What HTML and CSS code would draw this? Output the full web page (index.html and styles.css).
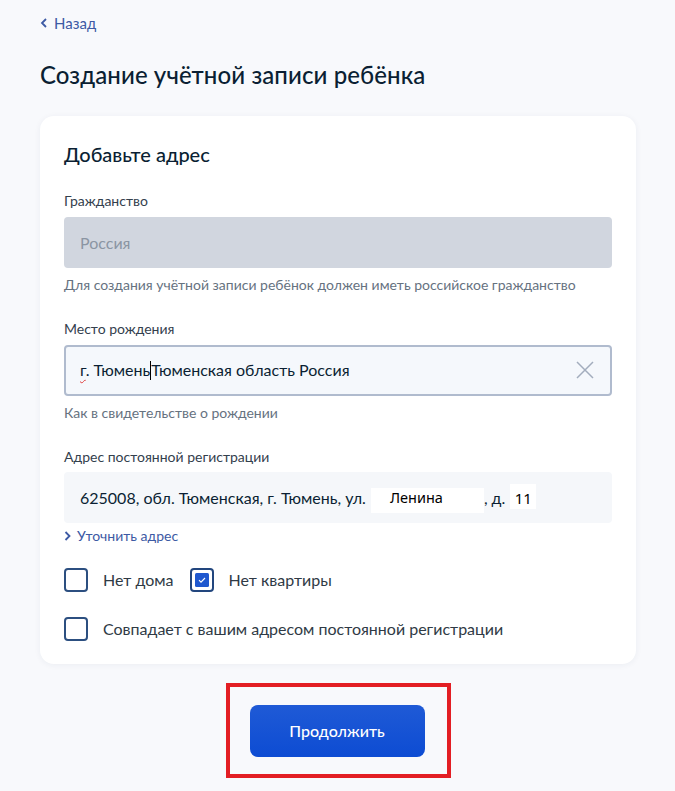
FILE: index.html
```html
<!DOCTYPE html>
<html lang="ru">
<head>
<meta charset="utf-8">
<title>Создание учётной записи ребёнка</title>
<link rel="stylesheet" href="styles.css">
</head>
<body>
<div class="page">
  <a class="back" href="#"><svg class="back-icon" width="8" height="10" viewBox="0 0 8 10"><path d="M6 1 L2 5 L6 9" fill="none" stroke="currentColor" stroke-width="1.8"/></svg>Назад</a>
  <h1 class="title">Создание учётной записи ребёнка</h1>
  <div class="card">
    <h2 class="card-title">Добавьте адрес</h2>

    <div class="label">Гражданство</div>
    <div class="field field-disabled">Россия</div>
    <div class="hint">Для создания учётной записи ребёнок должен иметь российское гражданство</div>

    <div class="label label-gap">Место рождения</div>
    <div class="field field-input">
      <span class="value"><span class="spell">г</span>. Тюмень<span class="caret"></span>Тюменская область Россия</span>
      <svg class="clear" width="18" height="18" viewBox="0 0 18 18"><path d="M1 1 L17 17 M17 1 L1 17" stroke="#a3adbd" stroke-width="1.5" fill="none"/></svg>
    </div>
    <div class="hint">Как в свидетельстве о рождении</div>

    <div class="label label-gap">Адрес постоянной регистрации</div>
    <div class="field field-address">625008, обл. Тюменская, г. Тюмень, ул.<span class="patch patch-street">Ленина</span>, д.<span class="patch patch-house">11</span></div>
    <a class="refine" href="#"><svg class="refine-icon" width="7" height="10" viewBox="0 0 7 10"><path d="M1.5 1 L5.5 5 L1.5 9" fill="none" stroke="currentColor" stroke-width="1.8"/></svg>Уточнить адрес</a>

    <div class="checks-row">
      <label class="check"><span class="box"></span>Нет дома</label>
      <label class="check"><span class="box box-checked"><svg width="14" height="14" viewBox="0 0 14 14"><rect width="14" height="14" rx="1.5" fill="#1f58cf"/><path d="M4 7.2 L6 9.2 L10 5" fill="none" stroke="#fff" stroke-width="1.1"/></svg></span>Нет квартиры</label>
    </div>
    <div class="checks-row checks-row-2">
      <label class="check"><span class="box"></span>Совпадает с вашим адресом постоянной регистрации</label>
    </div>
  </div>
  <div class="actions">
    <div class="highlight">
      <button class="btn">Продолжить</button>
    </div>
  </div>
</div>
</body>
</html>
```

FILE: styles.css
```css
* { box-sizing: border-box; }
html, body { margin: 0; padding: 0; }
body {
  background: #f8f9fc;
  font-family: Lato, "Noto Sans", "Liberation Sans", sans-serif;
  color: #0b1f33;
}
.page {
  padding: 12px 39px 0 40px;
}
.back {
  display: inline-flex;
  align-items: center;
  gap: 6px;
  height: 18px;
  font-size: 15px;
  line-height: 18px;
  color: #3d5aa4;
  text-decoration: none;
}
.back-icon { margin-top: 1px; }
.title {
  margin: 27px 0 0;
  font-size: 24px;
  line-height: 32px;
  font-weight: 500;
  color: #0b1f33;
  letter-spacing: 0.1px;
}
.card {
  margin-top: 25px;
  width: 596px;
  background: #fff;
  border-radius: 14px;
  box-shadow: 0 1px 6px rgba(30, 50, 90, 0.06);
  padding: 24px 24px 23px;
}
.card-title {
  margin: 0;
  font-size: 20px;
  line-height: 28px;
  font-weight: 500;
}
.label {
  margin-top: 23px;
  font-size: 14px;
  line-height: 20px;
  color: #33404d;
}
.label-gap { margin-top: 25px; }
.field {
  margin-top: 6px;
  height: 51px;
  border-radius: 4px;
  display: flex;
  align-items: center;
  padding: 0 16px;
  font-size: 16px;
}
.field-disabled {
  background: #d1d6df;
  color: #8b95a3;
}
.field-input {
  background: #f5f8fc;
  border: 2px solid #b0bbce;
  padding: 0 14px;
  justify-content: space-between;
  color: #0b1f33;
}
.spell {
  text-decoration: underline wavy #e04040;
  text-decoration-thickness: 1px;
  text-underline-offset: 3px;
}
.caret {
  display: inline-block;
  width: 1px;
  height: 19px;
  background: #000;
  vertical-align: -4px;
}
.clear { margin-right: 2px; }
.hint {
  margin-top: 8px;
  font-size: 14px;
  line-height: 18px;
  color: #66727f;
}
.field-address {
  margin-top: 5px;
  background: #f5f7fa;
  color: #0b1f33;
  padding-left: 16px;
}
.patch {
  background: #fff;
  font-family: "Noto Sans", "Liberation Sans", sans-serif;
  color: #000;
  display: block;
  align-self: flex-start;
}
.patch-street {
  width: 113px;
  height: 25px;
  margin-left: 5px;
  padding: 0 0 0 19px;
  margin-top: 16px;
  font-size: 14.5px;
  line-height: 18px;
}
.patch-house {
  width: 26px;
  height: 25px;
  margin-left: 5px;
  padding-top: 4px;
  text-align: center;
  margin-top: 12px;
  font-size: 15px;
  line-height: 20px;
}
.refine {
  margin-top: 4px;
  display: inline-flex;
  align-items: center;
  gap: 6px;
  font-size: 14px;
  line-height: 18px;
  color: #3d5aa4;
  text-decoration: none;
}
.checks-row {
  margin-top: 23px;
  display: flex;
  gap: 16px;
}
.checks-row-2 { margin-top: 25px; }
.check {
  display: flex;
  align-items: center;
  gap: 15px;
  font-size: 16px;
  line-height: 24px;
  color: #2f3a45;
}
.box {
  width: 24px;
  height: 24px;
  border: 2px solid #2c4f80;
  border-radius: 4px;
  background: #fff;
  display: flex;
  align-items: center;
  justify-content: center;
  flex: none;
}
.box-checked { border-color: #22467e; }
.actions {
  display: flex;
  justify-content: center;
  width: 596px;
  margin-top: 19px;
}
.highlight {
  border: 4px solid #e31e24;
  padding: 18px 22px 17px 20px;
}
.btn {
  width: 175px;
  height: 52px;
  border: 0;
  border-radius: 8px;
  background: linear-gradient(180deg, #1f5ad6, #0d4cd3);
  color: #fff;
  font-family: Lato, "Noto Sans", sans-serif;
  font-size: 16px;
  font-weight: 500;
}
```
